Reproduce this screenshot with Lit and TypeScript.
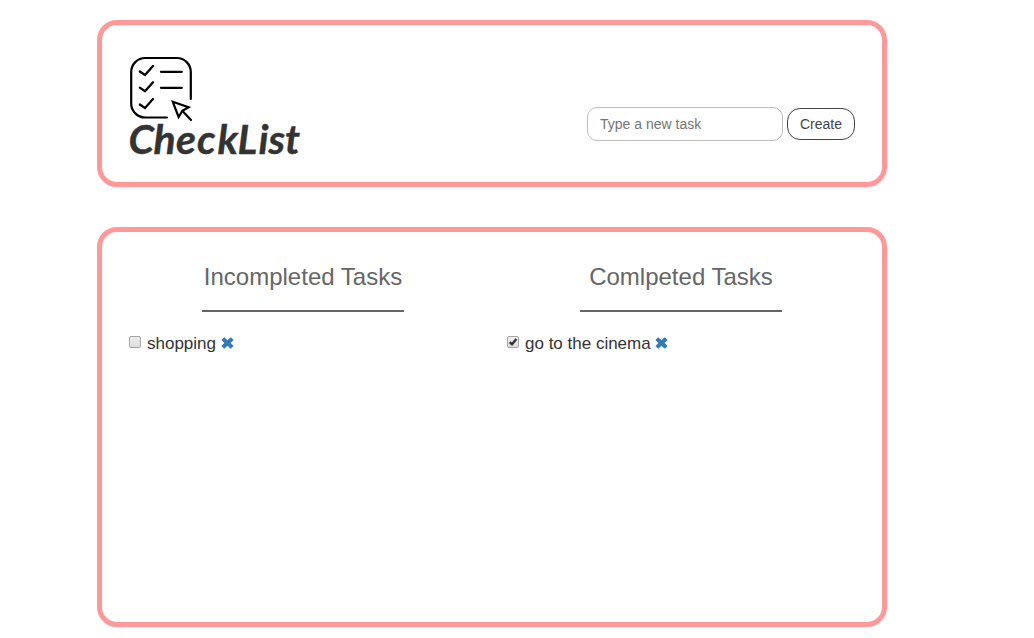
import { LitElement, html, css, svg } from "lit";
import { customElement, state } from "lit/decorators.js";

interface Task {
  title: string;
  done: boolean;
}

@customElement("app-root")
export class AppRoot extends LitElement {
  static styles = css`
    :host {
      display: block;
      height: 638px;
      box-sizing: border-box;
      padding: 20px 0 0 97px;
      background: #fff;
      color: #333;
      font: 14px/20px "Liberation Sans", Arial, sans-serif;
      overflow: hidden;
    }
    * { box-sizing: border-box; }
    .panel {
      width: 790px;
      border: 5px solid #ff9999;
      border-radius: 20px;
      background: #fff;
    }
    .header {
      height: 167px;
      display: flex;
      justify-content: space-between;
      padding: 31px 27px 0 27px;
    }
    .logo { width: 176px; height: 106px; display: block; overflow: visible; }
    .wordmark {
      font-family: Lato, "Open Sans", sans-serif;
      font-size: 41px;
      font-style: italic;
      font-weight: 700;
      fill: #333;
      stroke: #333;
      stroke-width: 0.4;
    }
    .form { display: flex; align-items: center; gap: 4px; height: 34px; margin-top: 51px; }
    .input {
      width: 196px;
      height: 34px;
      border: 1px solid #bbb;
      border-radius: 10px;
      padding: 6px 12px;
      font: inherit;
      color: #555;
      background: #fff;
      outline: none;
    }
    .input::placeholder { color: #757575; opacity: 1; }
    .create {
      width: 68px;
      height: 32px;
      border: 1px solid #444;
      border-radius: 13px;
      padding: 0;
      background: #fff;
      color: #444;
      font: inherit;
    }
    .board {
      height: 400px;
      margin-top: 40px;
      display: grid;
      grid-template-columns: 378px 378px;
      padding-left: 12px;
      align-items: start;
    }
    .column { padding: 0 15px; }
    .title {
      width: 202px;
      height: 80px;
      margin: 0 auto;
      padding-top: 31px;
      border-bottom: 2px solid #666;
      font-size: 24px;
      line-height: 28px;
      font-weight: 400;
      color: #666;
      text-align: center;
      white-space: nowrap;
    }
    .task {
      display: flex;
      align-items: center;
      height: 24px;
      margin-top: 20px;
      font-size: 17px;
      line-height: 24px;
    }
    .check { width: 12px; height: 12px; margin: -4px 6px 0 0; display: block; overflow: visible; flex: none; }
    .remove { width: 13px; height: 12px; margin: -2px 0 0 4.5px; display: block; flex: none; }
    .remove path { fill: #337ab7; }
  `;

  @state() private tasks: Task[] = [
    { title: "shopping", done: false },
    { title: "go to the cinema", done: true },
  ];

  private toggle(task: Task) {
    this.tasks = this.tasks.map((t) => (t === task ? { ...t, done: !t.done } : t));
  }

  private remove(task: Task) {
    this.tasks = this.tasks.filter((t) => t !== task);
  }

  private create() {
    const field = this.renderRoot.querySelector("input") as HTMLInputElement;
    const title = field.value.trim();
    if (!title) return;
    this.tasks = [...this.tasks, { title, done: false }];
    field.value = "";
  }

  private renderLogo() {
    return html`<svg class="logo" viewBox="129 56 176 106" role="img" aria-label="CheckList">
      <g fill="none" stroke="#000" stroke-width="2.2" stroke-linecap="round">
        <path d="M190.8 99V72A14 14 0 0 0 176.8 58H145.2A14 14 0 0 0 131.2 72V103.5A14 14 0 0 0 145.2 117.5H167" />
        <path d="M161 71.8H181.8M161 87.8H181.8" />
        <path d="M139.8 71.5L145 75L153 66M139.8 87.7L145 91.2L153 82.2M139.8 104.5L145 108L153 99" />
        <path d="M172.8 101.8L188.6 107.3L182.4 110.8L178.6 117Z" stroke-linecap="butt" />
        <path d="M182.5 111L191 120" />
      </g>
      <text class="wordmark" x="128.5 153.5 176 197 217.5 237.5 258.5 268.5 285" y="154">CheckList</text>
    </svg>`;
  }

  private renderTask(task: Task) {
    return html`<div class="task">
      <svg class="check" viewBox="0 0 12 12" role="checkbox" aria-checked=${task.done} @click=${() => this.toggle(task)}>
        <defs>
          <linearGradient id="shade" x1="0" y1="0" x2="0" y2="1">
            <stop offset="0" stop-color="#ededed" />
            <stop offset="1" stop-color="#dcdcdc" />
          </linearGradient>
        </defs>
        <rect x=".5" y=".5" width="11" height="11" rx="1.5" fill="url(#shade)" stroke="#a6a6a6" />
        ${task.done ? svg`<path d="M2.7 6.1L5 8.3L9.4 3" fill="none" stroke="#333" stroke-width="2.3" />` : null}
      </svg>
      <span>${task.title}</span>
      <svg class="remove" viewBox="0 0 13 12" @click=${() => this.remove(task)}>
        <path d="M3.2 .2L6.5 3.2L9.8 .2L12.6 3L9.6 6L12.6 9L9.8 11.8L6.5 8.8L3.2 11.8L.4 9L3.4 6L.4 3Z" />
      </svg>
    </div>`;
  }

  private renderColumn(title: string, done: boolean) {
    return html`<div class="column">
      <h3 class="title">${title}</h3>
      ${this.tasks.filter((t) => t.done === done).map((t) => this.renderTask(t))}
    </div>`;
  }

  render() {
    return html`
      <header class="panel header">
        ${this.renderLogo()}
        <div class="form">
          <input class="input" placeholder="Type a new task" />
          <button class="create" @click=${this.create}>Create</button>
        </div>
      </header>
      <main class="panel board">
        ${this.renderColumn("Incompleted Tasks", false)} ${this.renderColumn("Comlpeted Tasks", true)}
      </main>
    `;
  }
}
